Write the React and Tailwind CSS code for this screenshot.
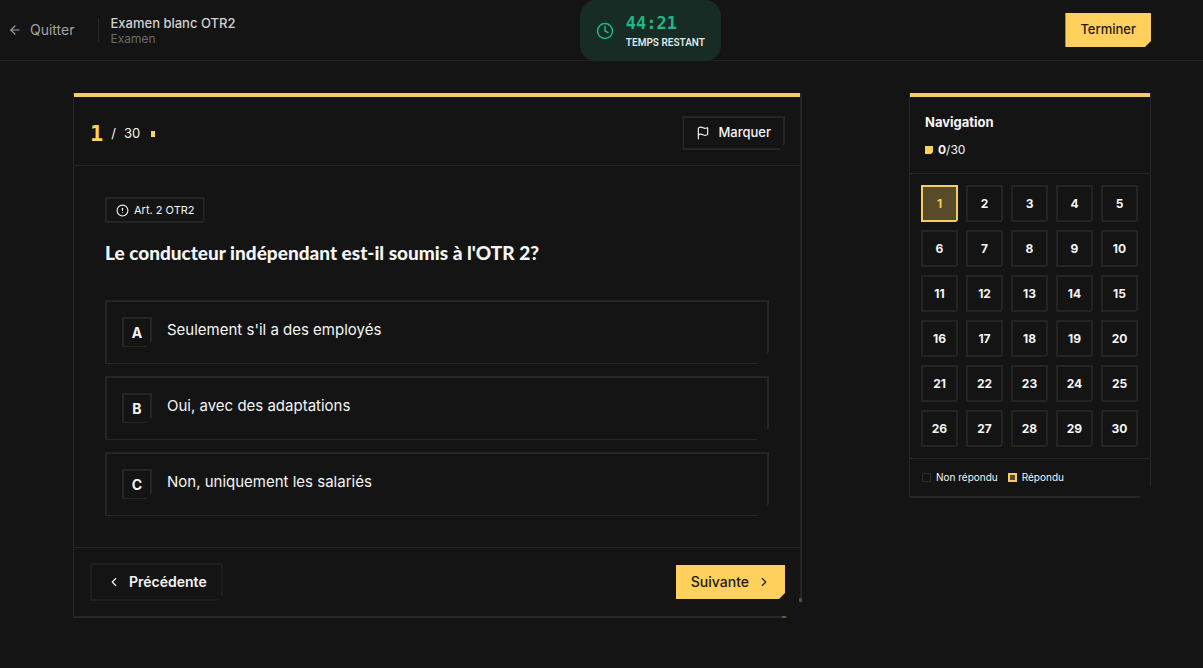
import { ArrowLeft, ChevronLeft, ChevronRight, CircleAlert, Clock, Flag } from "lucide-react";

const answers = [
  { letter: "A", text: "Seulement s'il a des employés" },
  { letter: "B", text: "Oui, avec des adaptations" },
  { letter: "C", text: "Non, uniquement les salariés" },
];

const questions = Array.from({ length: 30 }, (_, i) => i + 1);

// Bottom-right corner cuts, from small badges up to the big cards
const cut2 = "[clip-path:polygon(0_0,100%_0,100%_calc(100%-2px),calc(100%-2px)_100%,0_100%)]";
const cut6 = "[clip-path:polygon(0_0,100%_0,100%_calc(100%-6px),calc(100%-6px)_100%,0_100%)]";
const cut12 = "[clip-path:polygon(0_0,100%_0,100%_calc(100%-12px),calc(100%-12px)_100%,0_100%)]";
const cut16 = "[clip-path:polygon(0_0,100%_0,100%_calc(100%-16px),calc(100%-16px)_100%,0_100%)]";

function Header() {
  return (
    <header className="flex items-center justify-between border-b border-[#222222] pl-2 pr-[52px]">
      <div className="flex items-center">
        <button className="flex items-center gap-2 text-sm text-[#a3a3a3]">
          <ArrowLeft size={14} />
          Quitter
        </button>
        <div className="ml-[23px] mr-3 h-6 w-px bg-[#262626]" />
        <div className="pt-0.5">
          <h1 className="text-[13px] leading-4 font-medium text-[#d0d0d0]">Examen blanc OTR2</h1>
          <p className="text-xs leading-4 text-[#6b6b6b]">Examen</p>
        </div>
      </div>

      <div className="-mb-px flex items-center gap-3 rounded-2xl bg-[#182c26] px-4 pt-[11px] pb-[10px]">
        <Clock size={18} className="text-[#1fb684]" />
        <div>
          <div className="font-['DejaVu_Sans_Mono',monospace] text-[17px] leading-6 font-bold text-[#1fb684]">44:21</div>
          <div className="font-['Roboto',sans-serif] text-[10px] leading-4 font-semibold text-[#dfe5e3]">TEMPS RESTANT</div>
        </div>
      </div>

      <button className={`h-[34px] bg-[#ffd05b] px-[15px] text-[13px] font-medium text-[#1c1a14] ${cut6}`}>
        Terminer
      </button>
    </header>
  );
}

function Question() {
  return (
    <section className={`relative min-w-0 flex-1 border-2 border-t-0 border-l border-[#262626] ${cut16}`}>
      <div className="h-1 bg-[#f6cd60]" />

      <div className="flex items-center justify-between border-b border-[#262626] pt-[19px] pr-[15px] pb-[15px] pl-4">
        <div className="flex items-center pt-0.5 text-[13px]">
          <span className="font-['DejaVu_Sans_Mono',monospace] text-[22px] leading-7 font-bold text-[#ffd05b]">1</span>
          <span className="ml-2">/</span>
          <span className="ml-2">30</span>
          <span className="ml-[11px] h-[6px] w-1 bg-[#ffd05b]" />
        </div>
        <button className={`flex h-[34px] items-center gap-2 border-2 border-[#262626] px-3 text-[13px] font-medium ${cut6}`}>
          <Flag size={14} />
          Marquer
        </button>
      </div>

      <div className="p-[31px]">
        <div className={`flex h-[26px] w-fit items-center gap-[5px] border-2 border-[#262626] pr-2 pl-[9px] text-[11px] ${cut2}`}>
          <CircleAlert size={13} />
          Art. 2 OTR2
        </div>
        <h2 className="mt-[15px] font-['Lato',sans-serif] text-[19px] leading-[30px] font-black">
          Le conducteur indépendant est-il soumis à l'OTR 2?
        </h2>

        <div className="mt-8 flex flex-col gap-3">
          {answers.map((a) => (
            <button
              key={a.letter}
              className={`flex items-start gap-[15px] border-2 border-b border-[#262626] px-[15px] pt-[15px] pb-4 text-left ${cut12}`}
            >
              <span className={`flex size-[30px] items-center justify-center border-2 border-b border-[#262626] text-sm font-bold ${cut6}`}>
                {a.letter}
              </span>
              <span className="text-[15px] leading-[26px]">{a.text}</span>
            </button>
          ))}
        </div>
      </div>

      <div className="flex items-center justify-between border-t border-[#262626] py-[15px] pr-[15px] pl-4">
        <button className={`flex h-[38px] items-center gap-2 border-2 border-[#1e1e1e] pr-[14px] pl-[15px] text-sm font-semibold ${cut6}`}>
          <ChevronLeft size={14} />
          Précédente
        </button>
        <button className={`flex h-[34px] items-center gap-2 bg-[#ffd05b] pr-[14px] pl-[15px] text-sm font-medium text-[#1c1a14] ${cut6}`}>
          Suivante
          <ChevronRight size={14} />
        </button>
      </div>

      {/* Glints where the border meets the cut */}
      <span className="absolute -right-0.5 bottom-[14px] h-1 w-[3px] bg-[#4a4a4a]" />
      <span className="absolute right-[14px] -bottom-0.5 h-0.5 w-1 bg-[#6b5c30]" />
    </section>
  );
}

function Navigation() {
  return (
    <aside className={`w-[242px] shrink-0 border border-t-0 border-b-2 border-[#262626] ${cut12}`}>
      <div className="h-1 bg-[#f6cd60]" />

      <div className="border-b border-[#262626] px-[15px] pt-[15px] pb-[13px]">
        <h2 className="text-[13px] leading-5 font-bold">Navigation</h2>
        <div className="mt-2 flex items-center gap-[5px] text-xs leading-5">
          <span className={`size-2 bg-[#ffd05b] ${cut2}`} />
          <span>
            <b>0</b>/30
          </span>
        </div>
      </div>

      <div className="grid grid-cols-5 gap-2 pt-[11px] pr-3 pb-[11px] pl-[11px]">
        {questions.map((n) => (
          <button
            key={n}
            className={`h-[37px] border-2 text-xs font-bold ${cut2} ${
              n === 1 ? "border-[#f6cd60] bg-[#594a29] text-[#f6cd60]" : "border-[#242424]"
            }`}
          >
            {n}
          </button>
        ))}
      </div>

      <div className="flex items-center gap-[10px] border-t border-[#262626] px-3 pt-[10px] pb-[11px] text-[10px] leading-4">
        <span className="flex items-center gap-[5px]">
          <span className="size-[9px] border border-[#2c2c2c]" />
          Non répondu
        </span>
        <span className="flex items-center gap-[5px]">
          <span className="size-[9px] border-2 border-[#f6cd60] bg-[#594a29]" />
          Répondu
        </span>
      </div>
    </aside>
  );
}

export default function App() {
  return (
    <div className="min-h-screen bg-[#141414] font-['Inter',sans-serif] text-[#f5f5f5]">
      <Header />
      <main className="flex items-start gap-[107px] pt-8 pr-[52px] pb-12 pl-[73px]">
        <Question />
        <Navigation />
      </main>
    </div>
  );
}
